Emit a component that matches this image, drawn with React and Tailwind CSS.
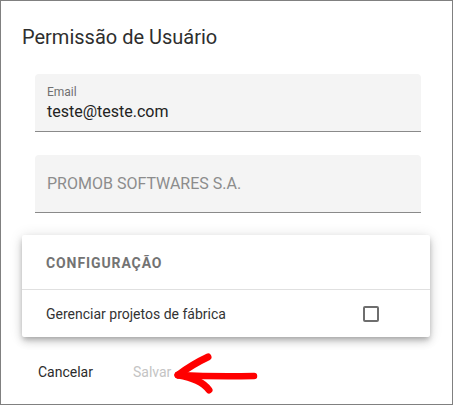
export default function App() {
  return (
    <div className="relative w-[453px] h-[405px] border border-[#808080] bg-white pt-[20px] pl-[21px] font-['Roboto',sans-serif]">
      <h2 className="text-[20px] leading-[32px] text-[#2e2e2e]">Permissão de Usuário</h2>

      {/* campos */}
      <div className="mt-[21px] ml-[13px] w-[386px] h-[58px] bg-[#f4f4f4] rounded-t-[4px] border-b border-[#8a8a8a] pt-[11px] px-[12px]">
        <p className="text-[12px] leading-[14px] text-[#707070]">Email</p>
        <p className="mt-[3px] text-[16px] leading-[19px] text-[#222]">teste@teste.com</p>
      </div>
      <div className="mt-[23px] ml-[13px] w-[386px] h-[58px] bg-[#f4f4f4] rounded-t-[4px] border-b border-[#8a8a8a] pt-[19px] px-[12px]">
        <p className="text-[16px] leading-[19px] text-[#8c8c8c]">PROMOB SOFTWARES S.A.</p>
      </div>

      {/* configuração */}
      <div className="mt-[22px] w-[408px] bg-white rounded-[2px] shadow-[0_3px_5px_-1px_rgba(0,0,0,0.2),0_5px_8px_0_rgba(0,0,0,0.14),0_1px_14px_0_rgba(0,0,0,0.12)]">
        <div className="h-[55px] pt-[20px] pl-[24px] border-b border-[#e0e0e0]">
          <p className="text-[14px] leading-[16px] font-bold tracking-[0.9px] text-[#737373]">CONFIGURAÇÃO</p>
        </div>
        <div className="h-[47px] flex items-center justify-between pl-[24px] pr-[51px]">
          <span className="text-[14px] leading-[16px] text-[#333]">Gerenciar projetos de fábrica</span>
          <span className="w-[16px] h-[16px] border-2 border-[#6e6e6e] rounded-[2px]"></span>
        </div>
      </div>

      <div className="mt-[27px] ml-[16px] flex gap-[40px] text-[14px] leading-[16px]">
        <button className="text-[#2b2b2b]">Cancelar</button>
        <button className="text-[#c4c4c4]">Salvar</button>
      </div>

      <svg className="absolute left-[164px] top-[349px] w-[95px] h-[45px]" viewBox="0 0 95 45" fill="none">
        <path d="M43 7 Q28 14 13 25" stroke="#ff0000" strokeWidth="7" strokeLinecap="round" />
        <path d="M13 25 Q36 29 44 40" stroke="#ff0000" strokeWidth="7" strokeLinecap="round" />
        <path d="M13 25 Q50 27 89 26" stroke="#ff0000" strokeWidth="6.5" strokeLinecap="round" />
      </svg>
    </div>
  );
}
